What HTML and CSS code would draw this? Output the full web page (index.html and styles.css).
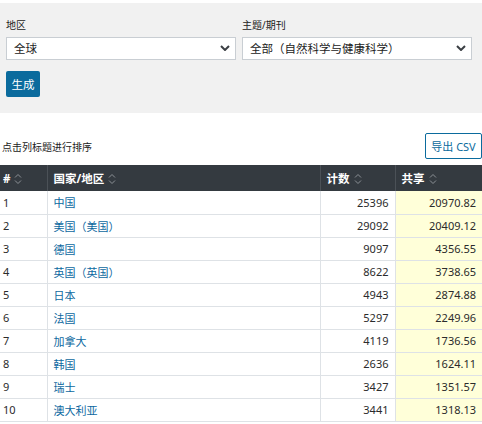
FILE: index.html
```html
<!DOCTYPE html>
<html lang="zh-CN">
<head>
<meta charset="utf-8">
<link rel="stylesheet" href="styles.css">
</head>
<body>
<div class="page">
  <div class="panel">
    <div class="fields">
      <div class="field">
        <label class="label">地区</label>
        <div class="select-wrap">
          <select class="select"><option>全球</option></select>
          <svg class="chev" viewBox="0 0 10 6" width="10" height="6"><path d="M1 1 L5 5 L9 1" fill="none" stroke="#3b3f44" stroke-width="2"/></svg>
        </div>
      </div>
      <div class="field">
        <label class="label">主题/期刊</label>
        <div class="select-wrap">
          <select class="select"><option>全部（自然科学与健康科学）</option></select>
          <svg class="chev" viewBox="0 0 10 6" width="10" height="6"><path d="M1 1 L5 5 L9 1" fill="none" stroke="#3b3f44" stroke-width="2"/></svg>
        </div>
      </div>
    </div>
    <button class="btn-primary">生成</button>
  </div>

  <div class="toolbar">
    <span class="hint">点击列标题进行排序</span>
    <button class="btn-outline">导出 CSV</button>
  </div>

  <table class="tbl">
    <thead>
      <tr>
        <th class="c-num">#<svg class="sort" viewBox="0 0 8 12" width="8" height="12"><path d="M1 4.5 L4 1.5 L7 4.5 M1 7.5 L4 10.5 L7 7.5" fill="none" stroke="#8c9196" stroke-width="1"/></svg></th>
        <th class="c-name">国家/地区<svg class="sort" viewBox="0 0 8 12" width="8" height="12"><path d="M1 4.5 L4 1.5 L7 4.5 M1 7.5 L4 10.5 L7 7.5" fill="none" stroke="#8c9196" stroke-width="1"/></svg></th>
        <th class="c-count">计数<svg class="sort" viewBox="0 0 8 12" width="8" height="12"><path d="M1 4.5 L4 1.5 L7 4.5 M1 7.5 L4 10.5 L7 7.5" fill="none" stroke="#8c9196" stroke-width="1"/></svg></th>
        <th class="c-share">共享<svg class="sort" viewBox="0 0 8 12" width="8" height="12"><path d="M1 4.5 L4 1.5 L7 4.5 M1 7.5 L4 10.5 L7 7.5" fill="none" stroke="#8c9196" stroke-width="1"/></svg></th>
      </tr>
    </thead>
    <tbody>
      <tr><td class="c-num">1</td><td class="c-name"><a>中国</a></td><td class="c-count">25396</td><td class="c-share">20970.82</td></tr>
      <tr><td class="c-num">2</td><td class="c-name"><a>美国（美国）</a></td><td class="c-count">29092</td><td class="c-share">20409.12</td></tr>
      <tr><td class="c-num">3</td><td class="c-name"><a>德国</a></td><td class="c-count">9097</td><td class="c-share">4356.55</td></tr>
      <tr><td class="c-num">4</td><td class="c-name"><a>英国（英国）</a></td><td class="c-count">8622</td><td class="c-share">3738.65</td></tr>
      <tr><td class="c-num">5</td><td class="c-name"><a>日本</a></td><td class="c-count">4943</td><td class="c-share">2874.88</td></tr>
      <tr><td class="c-num">6</td><td class="c-name"><a>法国</a></td><td class="c-count">5297</td><td class="c-share">2249.96</td></tr>
      <tr><td class="c-num">7</td><td class="c-name"><a>加拿大</a></td><td class="c-count">4119</td><td class="c-share">1736.56</td></tr>
      <tr><td class="c-num">8</td><td class="c-name"><a>韩国</a></td><td class="c-count">2636</td><td class="c-share">1624.11</td></tr>
      <tr><td class="c-num">9</td><td class="c-name"><a>瑞士</a></td><td class="c-count">3427</td><td class="c-share">1351.57</td></tr>
      <tr><td class="c-num">10</td><td class="c-name"><a>澳大利亚</a></td><td class="c-count">3441</td><td class="c-share">1318.13</td></tr>
    </tbody>
  </table>
</div>
</body>
</html>
```

FILE: styles.css
```css
* { box-sizing: border-box; }
html, body {
  margin: 0;
  padding: 0;
  background: #fff;
  font-family: "Noto Sans", "Noto Sans CJK SC", sans-serif;
  color: #2b2b2b;
}
.page {
  padding-top: 3px;
  width: 482px;
  overflow: hidden;
}
.panel {
  background: #f1f1f1;
  padding: 15px 10px 16px 6px;
}
.fields {
  display: grid;
  grid-template-columns: 230px 230px;
  column-gap: 6px;
}
.field {
  display: flex;
  flex-direction: column;
}
.label {
  font-size: 10px;
  line-height: 14px;
  height: 14px;
  margin-bottom: 4px;
  color: #222;
}
.select-wrap {
  position: relative;
  height: 23px;
}
.select {
  appearance: none;
  -webkit-appearance: none;
  width: 100%;
  height: 23px;
  border: 1px solid #c9ced3;
  border-radius: 0;
  background: #fff;
  padding: 0 0 0 7px;
  font-family: "Noto Sans", "Noto Sans CJK SC", sans-serif;
  font-size: 11.5px;
  color: #222;
  outline: none;
}
.chev {
  position: absolute;
  right: 6px;
  top: 9px;
  pointer-events: none;
}
.btn-primary {
  margin-top: 12px;
  width: 34px;
  height: 26px;
  border: none;
  border-radius: 2px;
  background: #0b6b9d;
  color: #fff;
  font-family: "Noto Sans", "Noto Sans CJK SC", sans-serif;
  font-size: 11.5px;
  padding: 0;
  display: block;
}
.toolbar {
  display: flex;
  justify-content: space-between;
  align-items: center;
  margin-top: 20px;
  margin-bottom: 6px;
}
.hint {
  font-size: 10px;
  padding-left: 2px;
  color: #222;
}
.btn-outline {
  width: 57px;
  height: 26px;
  border: 1px solid #0b6b9d;
  border-radius: 2px;
  background: #fff;
  color: #0b6b9d;
  font-family: "Noto Sans", "Noto Sans CJK SC", sans-serif;
  font-size: 11px;
  padding: 0;
}
.tbl {
  border-collapse: collapse;
  width: 482px;
  table-layout: fixed;
  font-size: 11px;
}
.tbl th {
  background: #343a40;
  color: #fff;
  font-weight: bold;
  height: 26px;
  text-align: left;
  padding: 0 6px;
  border-left: 1px solid #4b5157;
  font-size: 11.5px;
  white-space: nowrap;
}
.tbl th:first-child { border-left: none; padding-left: 3px; }
.sort {
  margin-left: 4px;
  vertical-align: -2px;
}
.tbl td {
  height: 23px;
  padding: 0 6px;
  border-bottom: 1px solid #dee2e6;
  border-left: 1px solid #dee2e6;
  color: #2b2b2b;
  white-space: nowrap;
}
.tbl td:first-child { border-left: none; padding-left: 3px; }
.c-num { width: 47px; }
.c-name { width: 273px; }
.c-count { width: 75px; }
.c-share { width: 87px; }
.tbl td.c-count, .tbl td.c-share { text-align: right; }
.tbl td.c-share { background: #ffffd9; }
.tbl a { color: #0c68a0; text-decoration: none; }
```
